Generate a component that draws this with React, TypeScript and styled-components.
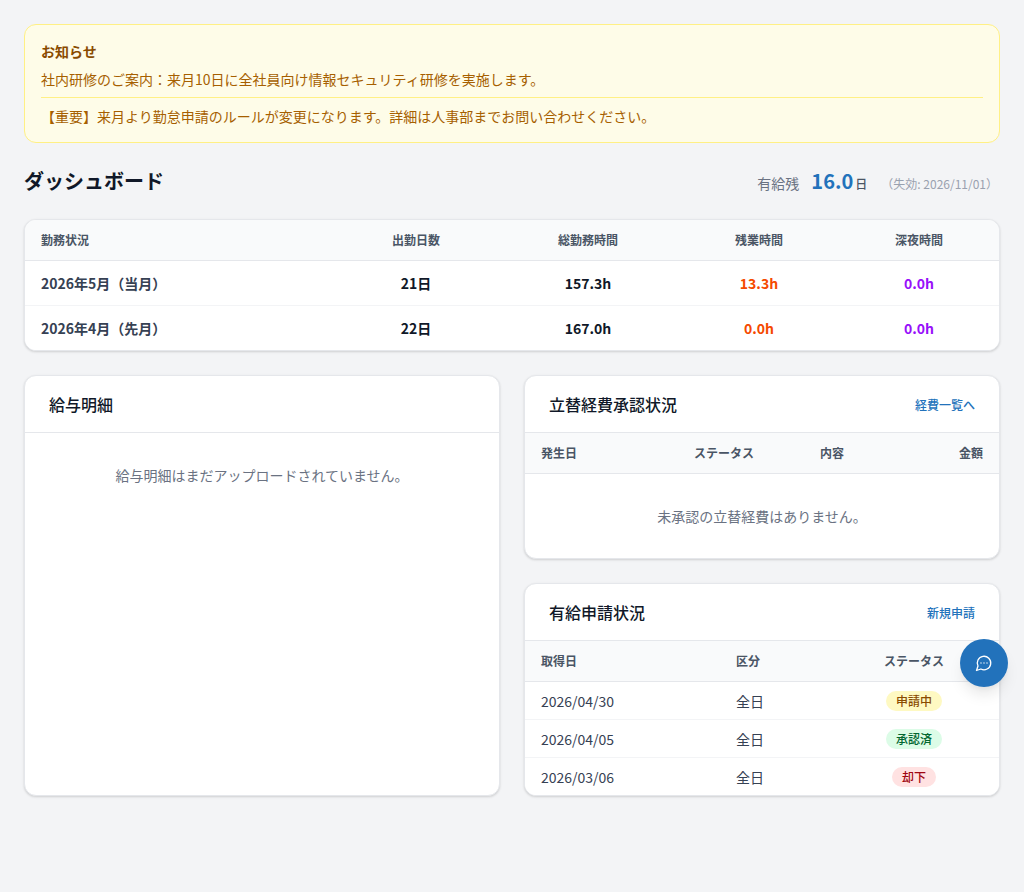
import React from "react";
import styled, { createGlobalStyle } from "styled-components";

const GlobalStyle = createGlobalStyle`
  html, body {
    margin: 0;
    padding: 0;
    background: #f3f4f6;
    font-family: "Noto Sans CJK JP", "Noto Sans", sans-serif;
    color: #101828;
  }
  * { box-sizing: border-box; }
`;

const Page = styled.main`
  padding: 24px;
`;

const Notice = styled.section`
  background: #fefce8;
  border: 1px solid #fff085;
  border-radius: 12px;
  padding: 16px;
  margin-bottom: 24px;
`;

const NoticeTitle = styled.h3`
  margin: 0;
  font-size: 14px;
  line-height: 20px;
  font-weight: 700;
  color: #894b00;
`;

const NoticeItem = styled.p`
  margin: 0;
  padding: 8px 0;
  font-size: 14px;
  line-height: 20px;
  color: #a65f00;
  & + & {
    border-top: 1px solid #fff085;
  }
  &:last-child {
    padding-bottom: 0;
  }
`;

const Heading = styled.div`
  display: flex;
  align-items: center;
  justify-content: space-between;
  height: 28px;
  margin-bottom: 24px;
`;

const Title = styled.h1`
  margin: 0;
  font-size: 20px;
  line-height: 28px;
  font-weight: 700;
  color: #101828;
`;

const Balance = styled.div`
  display: flex;
  align-items: baseline;
  padding-right: 2px;
`;

const BalanceLabel = styled.span`
  font-size: 14px;
  line-height: 20px;
  color: #6a7282;
  margin-right: 12px;
`;

const BalanceValue = styled.span`
  font-size: 20px;
  line-height: 28px;
  font-weight: 700;
  color: #2272bb;
`;

const BalanceUnit = styled.span`
  font-size: 12px;
  line-height: 16px;
  font-weight: 500;
  color: #4a5565;
  margin-left: 2px;
  margin-right: 14px;
`;

const BalanceExpiry = styled.span`
  font-size: 12px;
  line-height: 16px;
  color: #99a1af;
`;

const Card = styled.section`
  background: #fff;
  border-radius: 12px;
  border: 1px solid #e5e7eb;
  box-shadow: 0 1px 3px rgba(0, 0, 0, 0.1), 0 1px 2px rgba(0, 0, 0, 0.06);
  overflow: hidden;
`;

const Row = styled.div<{ $cols: string; $head?: boolean; $height: number }>`
  display: grid;
  grid-template-columns: ${(p) => p.$cols};
  align-items: center;
  height: ${(p) => p.$height}px;
  padding: 0 16px;
  background: ${(p) => (p.$head ? "#f9fafb" : "#fff")};
  border-bottom: 1px solid ${(p) => (p.$head ? "#e5e7eb" : "#f3f4f6")};
  &:last-child {
    height: ${(p) => p.$height - 1}px;
    border-bottom: none;
  }
`;

const Th = styled.div<{ $align?: string }>`
  font-size: 12px;
  line-height: 16px;
  font-weight: 700;
  color: #4a5565;
  text-align: ${(p) => p.$align || "left"};
`;

const Td = styled.div<{ $align?: string; $color?: string; $bold?: boolean }>`
  font-size: 14px;
  line-height: 20px;
  font-weight: ${(p) => (p.$bold ? 700 : 400)};
  color: ${(p) => p.$color || "#364153"};
  text-align: ${(p) => p.$align || "left"};
`;

const Columns = styled.div`
  display: grid;
  grid-template-columns: 1fr 1fr;
  gap: 24px;
  margin-top: 24px;
`;

const Stack = styled.div`
  display: flex;
  flex-direction: column;
  gap: 24px;
`;

const CardHeader = styled.header`
  display: flex;
  align-items: center;
  justify-content: space-between;
  height: 57px;
  padding: 0 24px;
  border-bottom: 1px solid #e5e7eb;
`;

const CardTitle = styled.h2`
  margin: 0;
  font-size: 16px;
  line-height: 24px;
  font-weight: 500;
  color: #101828;
`;

const CardLink = styled.a`
  font-size: 12px;
  font-weight: 500;
  color: #2272bb;
  text-decoration: none;
`;

const Empty = styled.p`
  margin: 0;
  padding: 32px 16px;
  text-align: center;
  font-size: 14px;
  line-height: 20px;
  color: #6a7282;
`;

const tones = {
  yellow: { bg: "#fef9c2", fg: "#894b00" },
  green: { bg: "#dcfce7", fg: "#016630" },
  red: { bg: "#ffe2e2", fg: "#9f0712" },
};

const Badge = styled.span<{ $tone: keyof typeof tones }>`
  display: inline-block;
  padding: 0 10px;
  height: 20px;
  line-height: 20px;
  border-radius: 999px;
  font-size: 12px;
  font-weight: 500;
  background: ${(p) => tones[p.$tone].bg};
  color: ${(p) => tones[p.$tone].fg};
`;

const ChatButton = styled.button`
  position: fixed;
  right: 16px;
  bottom: 205px;
  width: 48px;
  height: 48px;
  border: none;
  border-radius: 50%;
  background: #2272bb;
  color: #fff;
  display: flex;
  align-items: center;
  justify-content: center;
  box-shadow: 0 10px 15px -3px rgba(0, 0, 0, 0.1), 0 4px 6px -2px rgba(0, 0, 0, 0.05);
`;

const workCols = "294px 162px 182px 160px 160px";
const expenseCols = "1fr 116px 100px 101px";
const leaveCols = "195px 1fr 138px";

const workRows = [
  { month: "2026年5月（当月）", days: "21日", total: "157.3h", over: "13.3h", night: "0.0h" },
  { month: "2026年4月（先月）", days: "22日", total: "167.0h", over: "0.0h", night: "0.0h" },
];

const leaveRows: { date: string; kind: string; status: string; tone: keyof typeof tones }[] = [
  { date: "2026/04/30", kind: "全日", status: "申請中", tone: "yellow" },
  { date: "2026/04/05", kind: "全日", status: "承認済", tone: "green" },
  { date: "2026/03/06", kind: "全日", status: "却下", tone: "red" },
];

const App = () => {
  return (
    <Page>
      <GlobalStyle />
      <Notice>
        <NoticeTitle>お知らせ</NoticeTitle>
        <NoticeItem>社内研修のご案内：来月10日に全社員向け情報セキュリティ研修を実施します。</NoticeItem>
        <NoticeItem>【重要】来月より勤怠申請のルールが変更になります。詳細は人事部までお問い合わせください。</NoticeItem>
      </Notice>

      <Heading>
        <Title>ダッシュボード</Title>
        <Balance>
          <BalanceLabel>有給残</BalanceLabel>
          <BalanceValue>16.0</BalanceValue>
          <BalanceUnit>日</BalanceUnit>
          <BalanceExpiry>（失効: 2026/11/01）</BalanceExpiry>
        </Balance>
      </Heading>

      <Card>
        <Row $cols={workCols} $head $height={41}>
          <Th>勤務状況</Th>
          <Th $align="center">出勤日数</Th>
          <Th $align="center">総勤務時間</Th>
          <Th $align="center">残業時間</Th>
          <Th $align="center">深夜時間</Th>
        </Row>
        {workRows.map((r) => (
          <Row $cols={workCols} $height={45} key={r.month}>
            <Td $bold>{r.month}</Td>
            <Td $bold $align="center" $color="#101828">{r.days}</Td>
            <Td $bold $align="center" $color="#101828">{r.total}</Td>
            <Td $bold $align="center" $color="#f54900">{r.over}</Td>
            <Td $bold $align="center" $color="#9810fa">{r.night}</Td>
          </Row>
        ))}
      </Card>

      <Columns>
        <Card>
          <CardHeader>
            <CardTitle>給与明細</CardTitle>
          </CardHeader>
          <Empty>給与明細はまだアップロードされていません。</Empty>
        </Card>

        <Stack>
          <Card>
            <CardHeader>
              <CardTitle>立替経費承認状況</CardTitle>
              <CardLink href="#">経費一覧へ</CardLink>
            </CardHeader>
            <Row $cols={expenseCols} $head $height={41}>
              <Th>発生日</Th>
              <Th $align="center">ステータス</Th>
              <Th $align="center">内容</Th>
              <Th $align="right">金額</Th>
            </Row>
            <Empty>未承認の立替経費はありません。</Empty>
          </Card>

          <Card>
            <CardHeader>
              <CardTitle>有給申請状況</CardTitle>
              <CardLink href="#">新規申請</CardLink>
            </CardHeader>
            <Row $cols={leaveCols} $head $height={41}>
              <Th>取得日</Th>
              <Th>区分</Th>
              <Th $align="center">ステータス</Th>
            </Row>
            {leaveRows.map((r) => (
              <Row $cols={leaveCols} $height={38} key={r.date}>
                <Td>{r.date}</Td>
                <Td>{r.kind}</Td>
                <Td $align="center">
                  <Badge $tone={r.tone}>{r.status}</Badge>
                </Td>
              </Row>
            ))}
          </Card>
        </Stack>
      </Columns>

      <ChatButton aria-label="チャット">
        <svg width="18" height="18" viewBox="0 0 24 24" fill="none" stroke="currentColor" strokeWidth="1.75" strokeLinecap="round" strokeLinejoin="round">
          <path d="M7.9 20A9 9 0 1 0 4 16.1L2 22Z" />
          <path d="M8 12h.01" />
          <path d="M12 12h.01" />
          <path d="M16 12h.01" />
        </svg>
      </ChatButton>
    </Page>
  );
};

export default App;
